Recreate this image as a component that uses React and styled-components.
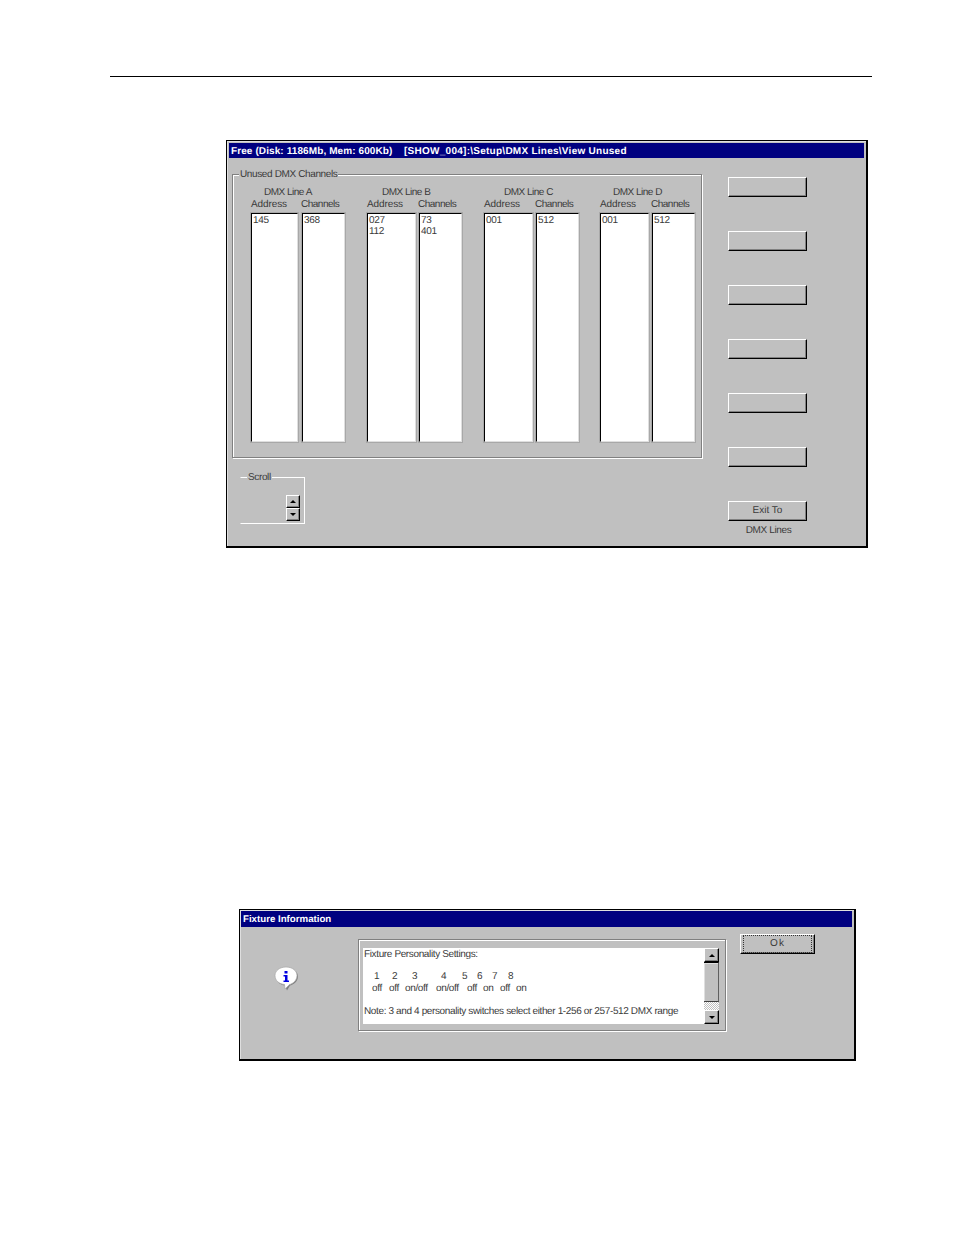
import React from 'react';
import styled, { createGlobalStyle } from 'styled-components';

const GlobalStyle = createGlobalStyle`
  html, body {
    margin: 0;
    padding: 0;
    background: #fff;
  }
  body {
    font-family: "Liberation Sans", Arial, sans-serif;
    font-size: 10px;
    letter-spacing: -0.37px;
    text-rendering: geometricPrecision;
    color: #3a3a3a;
  }
`;

const Page = styled.div`
  width: 954px;
  height: 1235px;
  padding-top: 76px;
  box-sizing: border-box;
  overflow: hidden;
`;

const HeaderRule = styled.div`
  width: 762px;
  height: 1px;
  margin-left: 110px;
  background: #000;
`;

const Win = styled.div`
  width: ${props => props.$w}px;
  height: ${props => props.$h}px;
  margin-top: ${props => props.$top}px;
  margin-left: ${props => props.$left}px;
  box-sizing: border-box;
  display: flex;
  flex-direction: column;
  padding: ${props => props.$padding};
  background: #c0c0c0;
  border: 1px solid #000;
  border-right-width: 2px;
  border-bottom-width: 2px;
  box-shadow: inset 1px 1px 0 #dfdfdf;
`;

const TitleBar = styled.div`
  height: ${props => props.$h}px;
  line-height: ${props => props.$h + 2}px;
  flex: none;
  padding-left: 2px;
  background: #000080;
  color: #fff;
  font-size: ${props => props.$size}px;
  font-weight: bold;
  letter-spacing: ${props => props.$spacing || 0}px;
  white-space: pre;
`;

const TitlePath = styled.span`
  letter-spacing: 0.26px;
`;

const MainBody = styled.div`
  display: flex;
  padding: 9px 0 0 3px;
`;

const LeftColumn = styled.div`
  display: flex;
  flex-direction: column;
  width: 471px;
`;

const Group = styled.fieldset`
  margin: ${props => props.$margin || 0};
  padding: 0;
  width: ${props => props.$w}px;
  height: ${props => props.$h}px;
  box-sizing: border-box;
  border: 1px solid #808080;
  box-shadow: inset 1px 1px 0 #fff, 1px 1px 0 #fff;
`;

const ScrollGroup = styled(Group)`
  border-color: #fff #fff #fff transparent;
  box-shadow: none;
`;

const GroupLegend = styled.legend`
  margin-left: ${props => props.$indent}px;
  padding: 2px 1px 0;
  line-height: 12px;
  background: #c0c0c0;
`;

const LinesRow = styled.div`
  display: flex;
  gap: 22px;
  padding: 6px 0 0 18px;
`;

const LineBlock = styled.div`
  display: flex;
  flex-direction: column;

  &:last-child {
    margin-left: -1px;
  }
`;

const LineName = styled.div`
  padding-left: ${props => props.$indent}px;
  line-height: 12px;
  white-space: nowrap;
  letter-spacing: -0.5px;
`;

const Columns = styled.div`
  display: flex;
  gap: ${props => props.$gap}px;
`;

const Column = styled.div`
  display: flex;
  flex-direction: column;
  width: ${props => props.$w}px;
`;

const ColumnLabel = styled.div`
  line-height: 12px;
  margin-bottom: 2px;
  margin-left: ${props => props.$shift || 0}px;
  white-space: nowrap;
  letter-spacing: ${props => props.$spacing || 0}px;
`;

const ListBox = styled.div`
  height: 229px;
  box-sizing: border-box;
  padding: 1px 1px 0;
  background: #fff;
  border: 1px solid;
  border-color: #000 #dfdfdf #dfdfdf #000;
  outline: 1px solid #a8a8a8;
  outline-offset: 0;
  line-height: 11px;
`;

const SpinBody = styled.div`
  display: flex;
  flex-direction: column;
  align-items: flex-end;
  padding: 11px 4px 0 0;
`;

const ArrowButton = styled.div`
  width: ${props => props.$w || 14}px;
  height: ${props => props.$h || 13}px;
  flex: none;
  box-sizing: border-box;
  display: flex;
  align-items: center;
  justify-content: center;
  background: #c0c0c0;
  border: 1px solid;
  border-color: #fff #000 #000 #fff;
  box-shadow: inset -1px -1px 0 #808080;

  &::before {
    content: "";
    border-left: 3px solid transparent;
    border-right: 3px solid transparent;
    ${props => props.$down ? 'border-top: 3px solid #000;' : 'border-bottom: 3px solid #000;'}
  }
`;

const ButtonColumn = styled.div`
  display: flex;
  flex-direction: column;
  align-items: center;
  width: 79px;
  margin: 10px 0 0 25px;
`;

const WinButton = styled.div`
  width: ${props => props.$w || 79}px;
  height: 20px;
  flex: none;
  margin-bottom: ${props => props.$gap || 0}px;
  padding-bottom: ${props => props.$lift || 0}px;
  box-sizing: border-box;
  display: flex;
  align-items: center;
  justify-content: center;
  background: #c0c0c0;
  border: 1px solid;
  border-color: #fff #000 #000 #fff;
  box-shadow: inset -1px -1px 0 #808080;
  letter-spacing: ${props => props.$spacing || 0}px;
`;

const FocusMark = styled.span`
  display: flex;
  align-items: center;
  justify-content: center;
  width: 100%;
  height: 100%;
  box-sizing: border-box;
  margin: 2px;
  padding-bottom: 2px;
  border: 1px dotted #333;
`;

const ExitCaption = styled.div`
  margin: 4px 0 0 2px;
  line-height: 12px;
  white-space: nowrap;
`;

const InfoBody = styled.div`
  display: flex;
  align-items: flex-start;
`;

const IconSlot = styled.div`
  width: 84px;
  padding: 39px 0 0 33px;
  flex: none;
  line-height: 0;
`;

const MessageFrame = styled.div`
  width: 368px;
  height: 92px;
  margin-top: 12px;
  padding: 8px 6px 6px 4px;
  flex: none;
  box-sizing: border-box;
  display: flex;
  border: 1px solid #808080;
  box-shadow: inset 1px 1px 0 #fff, 1px 1px 0 #fff;
`;

const MessageText = styled.div`
  flex: 1;
  min-width: 0;
  padding: 1px 0 0 1px;
  background: #fff;
  line-height: 11.5px;
  white-space: nowrap;
`;

const TextLine = styled.div`
  height: ${props => props.$h || 11.5}px;
`;

const SettingsRow = styled.div`
  display: flex;
  height: 11.5px;
  padding-left: ${props => props.$indent}px;
`;

const SettingCell = styled.span`
  flex: none;
  width: ${props => props.$w}px;
`;

const ScrollBar = styled.div`
  width: 15px;
  flex: none;
  display: flex;
  flex-direction: column;
`;

const ScrollThumb = styled.div`
  height: 40px;
  flex: none;
  box-sizing: border-box;
  background: #c0c0c0;
  border-top: 1px solid #000;
  border-bottom: 1px solid #404040;
  border-right: 1px solid #606060;
  box-shadow: inset 1px 1px 0 #dfdfdf;
`;

const ScrollTrack = styled.div`
  flex: 1;
  background: repeating-conic-gradient(#fff 0 25%, #c0c0c0 0 50%) 0 0 / 2px 2px;
`;

const OkSlot = styled.div`
  margin: 7px 0 0 14px;
`;

const lines = [
  { name: 'DMX Line A', indent: 13, addressW: 47, gap: 4, address: ['145'], channels: ['368'] },
  { name: 'DMX Line B', indent: 15, addressW: 49, gap: 3, address: ['027', '112'], channels: ['73', '401'] },
  { name: 'DMX Line C', indent: 20, addressW: 49, gap: 3, address: ['001'], channels: ['512'] },
  { name: 'DMX Line D', indent: 13, addressW: 49, gap: 3, address: ['001'], channels: ['512'] },
];

const digits = [['1', 18], ['2', 20], ['3', 29], ['4', 21], ['5', 15], ['6', 15], ['7', 16], ['8', 10]];
const values = [['off', 17], ['off', 16], ['on/off', 31], ['on/off', 31], ['off', 16], ['on', 17], ['off', 16], ['on', 14]];

const InfoIcon = () => (
  <svg width="25" height="25" viewBox="0 0 25 25">
    <path d="M13 2c6 0 11 3.500 11 8.500S19 19 16 19.500L13 24.500 11 19.500C6 19 2 15.500 2 10.500S7 2 13 2z" fill="#808080" />
    <path d="M12 1c6 0 11 3.500 11 8.500S18.500 18 15.500 18.500L11 23 10.500 18.500C5 18 1 14.500 1 9.500S6 1 12 1z" fill="#fff" stroke="#a8a8a8" strokeWidth="0.7" />
    <rect x="10.500" y="5" width="3" height="2.500" fill="#0000e0" />
    <path d="M9.500 9h4v5.500h1.500V16H9.500v-1.500H11V10.500H9.500z" fill="#0000e0" />
  </svg>
);

const App = () => {
  const emptyButtons = [0, 1, 2, 3, 4, 5];
  return (
    <Page>
      <GlobalStyle />
      <HeaderRule />

      <Win $w={642} $h={408} $top={63} $left={226} $padding="2px">
        <TitleBar $h={15} $size={10} $spacing={0.1}>
          {'Free (Disk: 1186Mb, Mem: 600Kb)    '}
          <TitlePath>{'[SHOW_004]:\\Setup\\DMX Lines\\View Unused'}</TitlePath>
        </TitleBar>
        <MainBody>
          <LeftColumn>
            <Group $w={470} $h={291}>
              <GroupLegend $indent={6}>Unused DMX Channels</GroupLegend>
              <LinesRow>
                {lines.map(line => (
                  <LineBlock key={line.name}>
                    <LineName $indent={line.indent}>{line.name}</LineName>
                    <Columns $gap={line.gap}>
                      <Column $w={line.addressW}>
                        <ColumnLabel $spacing={-0.1}>Address</ColumnLabel>
                        <ListBox>{line.address.map(v => <div key={v}>{v}</div>)}</ListBox>
                      </Column>
                      <Column $w={43}>
                        <ColumnLabel $shift={-1} $spacing={-0.5}>Channels</ColumnLabel>
                        <ListBox>{line.channels.map(v => <div key={v}>{v}</div>)}</ListBox>
                      </Column>
                    </Columns>
                  </LineBlock>
                ))}
              </LinesRow>
            </Group>
            <ScrollGroup $w={65} $h={54} $margin="12px 0 0 8px">
              <GroupLegend $indent={6}>Scroll</GroupLegend>
              <SpinBody>
                <ArrowButton />
                <ArrowButton $down />
              </SpinBody>
            </ScrollGroup>
          </LeftColumn>
          <ButtonColumn>
            {emptyButtons.map(n => <WinButton key={n} $gap={34} />)}
            <WinButton $lift={2}>Exit To</WinButton>
            <ExitCaption>DMX Lines</ExitCaption>
          </ButtonColumn>
        </MainBody>
      </Win>

      <Win $w={617} $h={152} $top={361} $left={239} $padding="1px 2px 2px 1px">
        <TitleBar $h={16} $size={9.7}>Fixture Information</TitleBar>
        <InfoBody>
          <IconSlot><InfoIcon /></IconSlot>
          <MessageFrame>
            <MessageText>
              <TextLine>Fixture Personality Settings:</TextLine>
              <TextLine $h={10.5} />
              <SettingsRow $indent={10}>
                {digits.map(([d, w]) => <SettingCell key={d} $w={w}>{d}</SettingCell>)}
              </SettingsRow>
              <SettingsRow $indent={8}>
                {values.map(([v, w], i) => <SettingCell key={i} $w={w}>{v}</SettingCell>)}
              </SettingsRow>
              <TextLine />
              <TextLine>Note: 3 and 4 personality switches select either 1-256 or 257-512 DMX range</TextLine>
            </MessageText>
            <ScrollBar>
              <ArrowButton $w={15} $h={14} />
              <ScrollThumb />
              <ScrollTrack />
              <ArrowButton $w={15} $h={14} $down />
            </ScrollBar>
          </MessageFrame>
          <OkSlot>
            <WinButton $w={75} $spacing={1}><FocusMark>Ok</FocusMark></WinButton>
          </OkSlot>
        </InfoBody>
      </Win>
    </Page>
  );
};

export default App;
